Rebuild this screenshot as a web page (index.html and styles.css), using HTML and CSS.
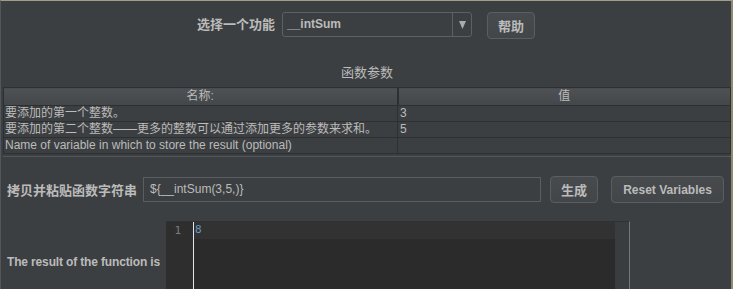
FILE: index.html
```html
<!DOCTYPE html>
<html lang="zh">
<head>
    <meta charset="UTF-8">
    <title>函数助手</title>
    <link rel="stylesheet" href="styles.css">
</head>
<body>
    <div class="frame">
        <div class="func-row">
            <span class="label">选择一个功能</span>
            <div class="combo">
                <span class="combo-text">__intSum</span>
                <span class="combo-arrow">
                    <svg width="7" height="8" viewBox="0 0 7 8"><path d="M0 0 H7 L3.5 8 Z" fill="#a9abad"/></svg>
                </span>
            </div>
            <button class="btn btn-help">帮助</button>
        </div>

        <div class="params-title">函数参数</div>

        <table class="params">
            <thead>
                <tr><th class="col-name">名称:</th><th class="col-value">值</th></tr>
            </thead>
            <tbody>
                <tr><td>要添加的第一个整数。</td><td>3</td></tr>
                <tr><td>要添加的第二个整数——更多的整数可以通过添加更多的参数来求和。</td><td>5</td></tr>
                <tr><td>Name of variable in which to store the result (optional)</td><td></td></tr>
            </tbody>
        </table>

        <div class="divider"></div>

        <div class="copy-row">
            <span class="label label-copy">拷贝并粘贴函数字符串</span>
            <div class="text-field">${__intSum(3,5,)}</div>
            <button class="btn btn-gen">生成</button>
            <button class="btn btn-reset">Reset Variables</button>
        </div>

        <div class="result-row">
            <span class="label label-result">The result of the function is</span>
            <div class="editor">
                <div class="gutter"><span class="line-no">1</span></div>
                <div class="code">
                    <div class="current-line">8</div>
                </div>
                <div class="scroll-col"></div>
            </div>
        </div>
    </div>
</body>
</html>
```

FILE: styles.css
```css
* {
    box-sizing: border-box;
}

body {
    margin: 0;
    background: #3c3f41;
    font-family: "Liberation Sans", "Noto Sans CJK SC", sans-serif;
    font-size: 12px;
    color: #bbbbbb;
}

.frame {
    width: 733px;
    height: 289px;
    overflow: hidden;
    background: #3c3f41;
    border-top: 1px solid #a29e86;
    border-left: 1px solid #54575a;
    border-right: 2px solid #8f8b72;
}

.label {
    font-weight: bold;
    font-size: 13px;
    color: #bbbbbb;
}

.func-row {
    display: flex;
    justify-content: center;
    align-items: flex-start;
    padding-top: 11px;
    height: 38px;
}

.func-row .label {
    line-height: 25px;
    margin-right: 7px;
}

.combo {
    display: flex;
    width: 190px;
    height: 25px;
    border: 1px solid #5e6163;
    border-radius: 3px;
    background: #3c3f41;
}

.combo-text {
    flex: 1;
    font-weight: bold;
    line-height: 23px;
    padding-left: 4px;
}

.combo-arrow {
    width: 19px;
    border-left: 1px solid #5e6163;
    display: flex;
    align-items: center;
    justify-content: center;
}

.btn {
    font-family: inherit;
    font-weight: bold;
    font-size: 12px;
    color: #bbbbbb;
    background: linear-gradient(#474b4d, #424648);
    border: 1px solid #5b5e60;
    border-radius: 4px;
    height: 27px;
    padding: 0;
    cursor: pointer;
}

.btn-help {
    width: 48px;
    margin-left: 15px;
    font-size: 13px;
}

.params-title {
    text-align: center;
    font-size: 13px;
    line-height: 16px;
    margin-top: 26px;
    padding-left: 2px;
}

.params {
    margin: 6px 0 0 2px;
    width: 728px;
    border-collapse: collapse;
    border: 1px solid #2d2f30;
    table-layout: fixed;
}

.params th {
    font-weight: normal;
    line-height: 17px;
    padding: 0;
    background: linear-gradient(#4e5254, #43474a);
    border: 1px solid #2d2f30;
    border-left: 2px solid #2d2f30;
}

.params th:first-child {
    border-left: 1px solid #2d2f30;
}

.col-name {
    width: 394px;
}

.params td {
    line-height: 15px;
    padding: 0 0 0 1px;
    border: 1px solid #2d2f30;
    white-space: nowrap;
    overflow: hidden;
}

.params td + td {
    padding-left: 2px;
}

.divider {
    margin: 2px 0 0 2px;
    width: 728px;
    height: 1px;
    background: #55585b;
}

.copy-row {
    display: flex;
    align-items: center;
    margin-top: 19px;
    padding-left: 6px;
    height: 27px;
}

.label-copy {
    width: 136px;
}

.text-field {
    width: 398px;
    height: 25px;
    line-height: 23px;
    border: 1px solid #5b5e60;
    background: #3c3f41;
    padding-left: 6px;
}

.btn-gen {
    width: 48px;
    margin-left: 9px;
    font-size: 13px;
}

.btn-reset {
    width: 113px;
    margin-left: 13px;
}

.result-row {
    display: flex;
    align-items: center;
    margin-top: 18px;
    padding-left: 6px;
}

.label-result {
    font-size: 12px;
    width: 159px;
    letter-spacing: -0.15px;
}

.editor {
    display: flex;
    width: 464px;
    height: 82px;
    border-top: 1px solid #2f3132;
    border-right: 1px solid #75787a;
    background: #2b2b2b;
}

.gutter {
    width: 28px;
    background: #2e2e2e;
    border-right: 1px solid #e6e6e6;
    padding-top: 2px;
}

.line-no {
    display: block;
    width: 15px;
    text-align: right;
    color: #7a7d80;
    font-family: "DejaVu Sans Mono", monospace;
    font-size: 11px;
    line-height: 13px;
}

.code {
    flex: 1;
}

.current-line {
    height: 17px;
    background: #323232;
    color: #6897bb;
    font-family: "DejaVu Sans Mono", monospace;
    font-size: 11px;
    line-height: 15px;
    padding-left: 1px;
}

.scroll-col {
    width: 14px;
    background: #3a3d3f;
}
```
